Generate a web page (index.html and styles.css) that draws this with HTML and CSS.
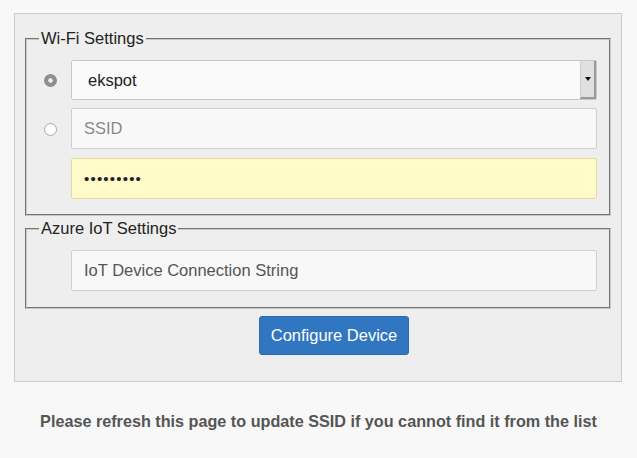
FILE: index.html
```html
<!DOCTYPE html>
<html>
<head>
<meta charset="utf-8">
<link rel="stylesheet" href="styles.css">
</head>
<body>
<div class="panel">
  <fieldset class="group">
    <legend>Wi-Fi Settings</legend>
    <div class="row">
      <span class="radio radio-on"></span>
      <div class="select">
        <span class="select-text">ekspot</span>
        <span class="select-btn"><span class="arrow"></span></span>
      </div>
    </div>
    <div class="row">
      <span class="radio"></span>
      <div class="field"><span class="ph">SSID</span></div>
    </div>
    <div class="row row-pw">
      <span></span>
      <div class="field pw"><span class="dots">&#8226;&#8226;&#8226;&#8226;&#8226;&#8226;&#8226;&#8226;&#8226;</span></div>
    </div>
  </fieldset>
  <fieldset class="group group2">
    <legend>Azure IoT Settings</legend>
    <div class="row">
      <span></span>
      <div class="field"><span class="ph dark">IoT Device Connection String</span></div>
    </div>
  </fieldset>
  <div class="actions">
    <button class="btn">Configure Device</button>
  </div>
</div>
<p class="note">Please refresh this page to update SSID if you cannot find it from the list</p>
</body>
</html>
```
FILE: styles.css
```css
* { box-sizing: border-box; }
html, body { margin: 0; }
body {
  background: #f8f8f8;
  font-family: "Liberation Sans", Arial, sans-serif;
  font-size: 16.5px;
  color: #222;
  padding: 13px 15px 0 14px;
}
.panel {
  background: #eeeeee;
  border: 1px solid #cccccc;
  padding: 15px 10px 26px 10px;
}
.group {
  margin: 0;
  border: 2px groove #c8c8c8;
  padding: 12px 12px 15px 0;
  display: flex;
  flex-direction: column;
  gap: 8px;
}
.group legend {
  margin-left: 12px;
  padding: 0 2px;
  line-height: 19px;
  color: #222;
}
.group2 { margin-top: 3px; padding-bottom: 16px; }
.row {
  display: grid;
  grid-template-columns: 44px 1fr;
  align-items: center;
}
.row-pw { margin-top: 1px; }
.radio {
  width: 13px;
  height: 13px;
  margin-left: 17px;
  margin-top: 1px;
  border-radius: 50%;
  border: 1px solid #a8a8a8;
  background: #fff;
}
.radio-on {
  border: none;
  background: radial-gradient(circle, #ececec 0 2px, #8e8e8e 2.5px);
}
.select {
  height: 40px;
  background: #fafafa;
  border: 1px solid #c8c8c8;
  border-radius: 2px;
  display: flex;
  align-items: stretch;
}
.select-text {
  flex: 1;
  padding-left: 16px;
  display: flex;
  align-items: center;
}
.select-btn {
  width: 16px;
  background: #e0e0e0;
  border-left: 1px solid #d0d0d0;
  border-right: 2px solid #9a9a9a;
  border-bottom: 2px solid #9a9a9a;
  display: flex;
  align-items: center;
  justify-content: center;
}
.arrow {
  width: 0; height: 0;
  border-left: 3px solid transparent;
  border-right: 3px solid transparent;
  border-top: 4px solid #111;
}
.field {
  height: 41px;
  background: #f8f8f8;
  border: 1px solid #cfcfcf;
  border-radius: 2px;
  display: flex;
  align-items: center;
  padding-left: 12px;
}
.field.pw {
  background: #fffbc8;
  border-color: #e8d9a0;
  padding-left: 12px;
}
.ph { color: #8a8a8a; }
.ph.dark { color: #555; }
.dots { font-size: 15px; letter-spacing: 1.2px; color: #222; }
.actions {
  display: flex;
  justify-content: center;
  margin-top: 7px;
}
.btn {
  width: 150px;
  height: 39px;
  margin-left: 32px;
  background: #3176c1;
  color: #fff;
  border: 1px solid #2c6bb0;
  border-radius: 3px;
  font-family: "Liberation Sans", Arial, sans-serif;
  font-size: 16.5px;
}
.note {
  margin: 30px -15px 0 -14px;
  text-align: center;
  font-weight: bold;
  color: #555;
  font-size: 16.2px;
}
```
